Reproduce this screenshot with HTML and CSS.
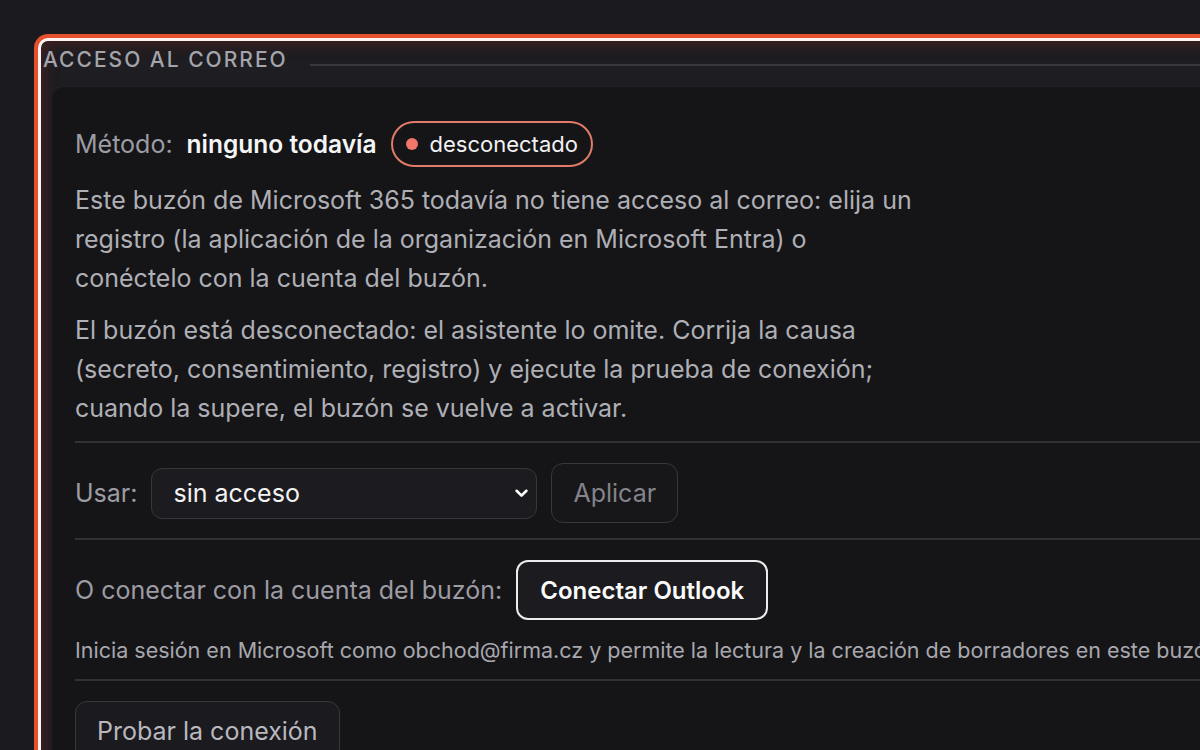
FILE: index.html
```html
<!DOCTYPE html>
<html lang="es">
<head>
    <meta charset="UTF-8">
    <meta name="viewport" content="width=device-width, initial-scale=1.0">
    <title>Acceso al correo</title>
    <link rel="stylesheet" href="styles.css">
</head>
<body>
    <div class="page">
        <section class="mail-access">
            <div class="section-title">
                <h2>Acceso al correo</h2>
                <span class="title-rule"></span>
            </div>
            <div class="card">
                <div class="method-row">
                    <span class="label">Método:</span>
                    <strong class="method-name">ninguno todavía</strong>
                    <span class="status-badge"><span class="dot"></span>desconectado</span>
                </div>
                <p class="info">Este buzón de Microsoft 365 todavía no tiene acceso al correo: elija un registro (la aplicación de la organización en Microsoft Entra) o conéctelo con la cuenta del buzón.</p>
                <p class="info">El buzón está desconectado: el asistente lo omite. Corrija la causa (secreto, consentimiento, registro) y ejecute la prueba de conexión; cuando la supere, el buzón se vuelve a activar.</p>

                <hr class="divider">

                <div class="use-row">
                    <label class="label" for="access-select">Usar:</label>
                    <div class="select-wrap">
                        <select id="access-select">
                            <option>sin acceso</option>
                        </select>
                        <svg class="chevron" viewBox="0 0 12 8" width="13" height="9">
                            <path d="M1.5 1.5 L6 6 L10.5 1.5" fill="none" stroke="#fff" stroke-width="2.4" stroke-linecap="round" stroke-linejoin="round"/>
                        </svg>
                    </div>
                    <button class="btn btn-disabled" disabled>Aplicar</button>
                </div>

                <hr class="divider">

                <div class="connect-row">
                    <span class="label">O conectar con la cuenta del buzón:</span>
                    <button class="btn btn-primary">Conectar Outlook</button>
                </div>
                <p class="hint">Inicia sesión en Microsoft como obchod@firma.cz y permite la lectura y la creación de borradores en este buzón.</p>

                <hr class="divider">

                <button class="btn btn-test">Probar la conexión</button>
            </div>
        </section>
    </div>
</body>
</html>
```

FILE: styles.css
```css
body {
    margin: 0;
    background: #1b1a1f;
    font-family: Inter, "Noto Sans", Arial, sans-serif;
    color: #b1b1b8;
    overflow: hidden;
    height: 750px;
}
.page {
    padding: 38px 0 0 38px;
}
/* highlighted section: orange ring with a light inner line */
.mail-access {
    width: 1320px;
    height: 800px;
    background: #1e1d21;
    border: 3px solid #fff4f1;
    border-radius: 10px;
    box-shadow: 0 0 0 4px #e5502d, inset 0 0 16px 2px rgba(150, 40, 30, 0.35);
    padding: 0 0 0 11px;
    box-sizing: border-box;
}
.section-title {
    display: flex;
    align-items: center;
    height: 34px;
    margin-left: -9px;
    padding-top: 1px;
}
.section-title h2 {
    margin: 0;
    font-size: 21px;
    font-weight: 500;
    letter-spacing: 2px;
    text-transform: uppercase;
    color: #a4a4ab;
}
.title-rule {
    flex: 1;
    height: 2px;
    background: #38373c;
    margin-left: 22px;
    margin-top: 12px;
}
.card {
    margin-top: 11px;
    background: #151517;
    border-radius: 12px 0 0 12px;
    padding: 34px 23px 0 23px;
    height: 700px;
    box-shadow: 0 -1px 0 #222126;
}
.method-row {
    display: flex;
    align-items: center;
}
.label {
    color: #9c9ca4;
    font-size: 25px;
}
.method-name {
    color: #f5f5f6;
    font-size: 24.5px;
    font-weight: 600;
    margin-left: 14px;
}
.status-badge {
    display: inline-flex;
    align-items: center;
    height: 42px;
    margin-left: 14px;
    padding: 0 13px;
    border: 2px solid #e07a6a;
    border-radius: 24px;
    color: #f2f2f3;
    font-size: 22px;
}
.dot {
    width: 12px;
    height: 12px;
    border-radius: 50%;
    background: #f0776a;
    margin-right: 12px;
}
.info {
    max-width: 845px;
    margin: 14px 0 0 0;
    font-size: 25px;
    line-height: 39px;
    color: #afafb6;
}
.info + .info {
    margin-top: 13px;
}
.divider {
    border: none;
    height: 2px;
    background: #313035;
    margin: 13px 0 0 0;
}
.use-row {
    display: flex;
    align-items: center;
    gap: 14px;
    margin-top: 20px;
}
.select-wrap {
    position: relative;
}
.select-wrap select {
    appearance: none;
    width: 386px;
    height: 51px;
    padding: 0 40px 0 21px;
    background: #1c1b20;
    border: 1.5px solid #37363c;
    border-radius: 11px;
    color: #f3f3f4;
    font-family: inherit;
    font-size: 25px;
}
.chevron {
    position: absolute;
    right: 9px;
    top: 21px;
    pointer-events: none;
}
.btn {
    font-family: inherit;
    font-size: 25px;
    height: 60px;
    padding: 0 21px;
    border-radius: 12px;
    background: #1b1a1e;
    border: 1.5px solid #38373d;
    color: #b8b8bf;
    cursor: pointer;
}
.btn-disabled {
    color: #84848c;
    background: #171619;
    cursor: default;
}
.btn-primary {
    color: #fbfbfb;
    font-size: 24px;
    font-weight: 600;
    padding: 0 22px;
    border: 2px solid #ececef;
    background: #1c1b1f;
}
.use-row + .divider {
    margin-top: 15px;
}
.connect-row {
    display: flex;
    align-items: center;
    gap: 14px;
    margin-top: 20px;
}
.hint {
    margin: 16px 0 0 0;
    font-size: 21.5px;
    line-height: 28px;
    white-space: nowrap;
    color: #a7a7ae;
}
.hint + .divider {
    margin-top: 15px;
}
.btn-test {
    margin-top: 20px;
}
```
